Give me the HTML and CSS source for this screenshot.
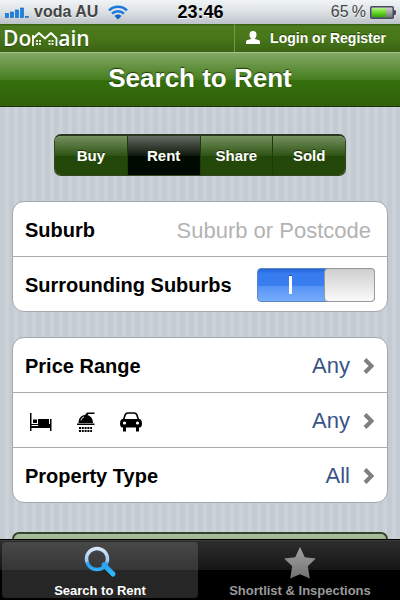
FILE: index.html
```html
<!DOCTYPE html>
<html lang="en">
<head>
    <meta charset="UTF-8">
    <meta name="viewport" content="width=device-width, initial-scale=1.0">
    <title>Search to Rent</title>
    <link rel="stylesheet" href="styles.css">
</head>
<body>

    <div class="status-bar">
        <div class="carrier">
            <svg width="25" height="12" viewBox="0 0 25 12">
                <g fill="#1583ea" stroke="#0b5fc0" stroke-width=".6">
                    <rect x=".5" y="7.5" width="3" height="4"/>
                    <rect x="5.5" y="6" width="3" height="5.5"/>
                    <rect x="10.5" y="4" width="3" height="7.5"/>
                    <rect x="15.5" y="2" width="3" height="9.5"/>
                    <rect x="20.5" y="10.5" width="3" height="1"/>
                </g>
            </svg>
            <span>voda AU</span>
            <svg class="wifi" width="20" height="15" viewBox="0 0 20 15">
                <g fill="none" stroke="#1a78df" stroke-width="2.4">
                    <path d="M1 5.5a12.7 12.7 0 0 1 18 0"/>
                    <path d="M4 8.7a8.5 8.5 0 0 1 12 0"/>
                </g>
                <path d="M10 14.5 6.5 11a5 5 0 0 1 7 0z" fill="#1262c8"/>
            </svg>
        </div>
        <div class="clock">23:46</div>
        <div class="battery">
            <span>65&#8201;%</span>
            <svg width="26" height="13" viewBox="0 0 26 13">
                <defs>
                    <linearGradient id="charge" x2="0" y2="1">
                        <stop offset="0" stop-color="#b5f08a"/>
                        <stop offset=".45" stop-color="#6fdc2c"/>
                        <stop offset="1" stop-color="#2fa508"/>
                    </linearGradient>
                    <linearGradient id="empty" x2="0" y2="1">
                        <stop offset="0" stop-color="#d5d5da"/>
                        <stop offset="1" stop-color="#6d6e74"/>
                    </linearGradient>
                </defs>
                <rect x=".75" y=".75" width="22.5" height="11.5" rx="1" fill="url(#empty)" stroke="#454c5c" stroke-width="1.5"/>
                <rect x="2" y="2" width="14" height="9" fill="url(#charge)"/>
                <path d="M24 4h1l1 1v3l-1 1h-1z" fill="#454c5c"/>
            </svg>
        </div>
    </div>

    <div class="brand-bar">
        <div class="logo">
            <span>Do</span>
            <svg width="27" height="17" viewBox="0 0 27 17">
                <g fill="none" stroke="#fff" stroke-width="1.8" stroke-linejoin="round">
                    <path d="M2 16V5"/>
                    <path d="M2 8.500 8 3l6 5.500L20 3l5.500 5.500V16"/>
                </g>
                <path d="M5 10h2v2H5zM8 10h2v2H8zM5 13h2v2H5zM8 13h2v2H8zM17.500 10h2v2h-2zM20.500 10h2v2h-2zM17.500 13h2v2h-2zM20.500 13h2v2h-2z" fill="#e5eedb"/>
            </svg>
            <span>ain</span>
        </div>
        <a class="login" href="#login">
            <svg width="14" height="14" viewBox="0 0 14 14" fill="#fff">
                <path d="M7 0c2.300 0 3.500 1.600 3.500 3.700 0 1.600-.6 3-1.600 3.800v.5l3.600 1c1 .4 1.500 1.200 1.500 2.200V13H0v-1.800c0-1 .5-1.800 1.500-2.200l3.600-1v-.5c-1-.8-1.600-2.200-1.600-3.800C3.500 1.600 4.700 0 7 0z"/>
            </svg>
            <span>Login or Register</span>
        </a>
    </div>

    <header class="title-bar">
        <h1>Search to Rent</h1>
    </header>

    <main class="content">
        <div class="segments">
            <button type="button">Buy</button>
            <button type="button" class="selected">Rent</button>
            <button type="button">Share</button>
            <button type="button">Sold</button>
        </div>

        <div class="group">
            <div class="row">
                <label for="suburb">Suburb</label>
                <input class="suburb" id="suburb" type="text" placeholder="Suburb or Postcode">
            </div>
            <div class="row">
                <label for="surrounding">Surrounding Suburbs</label>
                <input class="switch" id="surrounding" type="checkbox" checked>
            </div>
        </div>

        <div class="group">
            <button type="button" class="row">
                <span>Price Range</span>
                <span class="value">Any</span>
                <svg class="chevron" width="12" height="16" viewBox="0 0 12 16"><path d="M2 1.500 8.500 8 2 14.500"/></svg>
            </button>
            <button type="button" class="row" aria-label="Bedrooms, bathrooms and parking">
                <span class="features">
                    <svg width="22" height="18" viewBox="0 0 22 18">
                        <path d="M0 0h1.500v11H20V6h1.500v12H20v-3H1.500v3H0zM3 6.500h4V10H3zM8 6h11v8H8z"/>
                        <path d="M1.500 12.500H8" stroke="#fff"/>
                    </svg>
                    <svg width="18" height="20" viewBox="0 0 18 20">
                        <path d="M1.500 11C1.500 6.500 4 3.500 8 3l2-2.500h7.500V2H11.500l-1 1.300c3.500.7 5.500 3.700 5.500 7.700z"/>
                        <path d="M0 11.500h17.500V13H0z"/>
                        <path d="M4 8.500C4.500 6.500 5.500 5.500 7 5" fill="none" stroke="#fff"/>
                        <path d="M2 16h13M2 19h13" stroke="#000" stroke-width="2" stroke-dasharray="2 .8"/>
                    </svg>
                    <svg width="22" height="20" viewBox="0 0 22 20">
                        <path d="M3.500 8 5 3.200C5.500 1.500 6.500 1 8 1h6c1.500 0 2.500.5 3 2.200L18.500 8" fill="none" stroke="#000" stroke-width="1.600"/>
                        <path d="M3 7h16c2 0 3 2 3 4.500 0 2.500-1 4-2.500 4H19V19.500h-3V15.500H6v4H3V15.500h-.5C1 15.500 0 14 0 11.500 0 9 1 7 3 7z"/>
                        <circle cx="4.500" cy="11" r="1.600" fill="#fff"/>
                        <circle cx="17.500" cy="11" r="1.600" fill="#fff"/>
                    </svg>
                </span>
                <span class="value">Any</span>
                <svg class="chevron" width="12" height="16" viewBox="0 0 12 16"><path d="M2 1.500 8.500 8 2 14.500"/></svg>
            </button>
            <button type="button" class="row">
                <span>Property Type</span>
                <span class="value">All</span>
                <svg class="chevron" width="12" height="16" viewBox="0 0 12 16"><path d="M2 1.500 8.500 8 2 14.500"/></svg>
            </button>
        </div>

        <button type="button" class="search" aria-label="Search"></button>
    </main>

    <nav class="tab-bar">
        <a class="tab active" href="#search">
            <svg width="34" height="34" viewBox="0 0 34 34">
                <defs>
                    <linearGradient id="lens" x2="0" y2="32" gradientUnits="userSpaceOnUse">
                        <stop offset="0" stop-color="#e8effb"/>
                        <stop offset=".5" stop-color="#9cc8f5"/>
                        <stop offset=".58" stop-color="#2c9df5"/>
                        <stop offset="1" stop-color="#2fc0fa"/>
                    </linearGradient>
                </defs>
                <g fill="none" stroke="url(#lens)">
                    <path d="m21 20 9 9" stroke-width="5" stroke-linecap="round"/>
                    <circle cx="14" cy="14" r="10.500" stroke-width="3.500"/>
                </g>
            </svg>
            <span>Search to Rent</span>
        </a>
        <a class="tab" href="#shortlist">
            <svg width="34" height="34" viewBox="0 0 34 34">
                <defs>
                    <linearGradient id="star" x2="0" y2="1">
                        <stop offset="0" stop-color="#a4a4a4"/>
                        <stop offset="1" stop-color="#707070"/>
                    </linearGradient>
                </defs>
                <path d="M17 2l4.800 10.200 11 1.300-8 7.700 2 12.300L17 29.200 7.200 33.500l2-12.300-8-7.700 11-1.300z" fill="url(#star)"/>
            </svg>
            <span>Shortlist &amp; Inspections</span>
        </a>
    </nav>

</body>
</html>
```
FILE: styles.css
```css
*,
*::before,
*::after {
    box-sizing: border-box;
}
body {
    display: flex;
    flex-direction: column;
    height: 100vh;
    margin: 0;
    font-family: "Liberation Sans", Arial, sans-serif;
    font-weight: bold;
    background-color: #c5ccd4;
}
a {
    color: inherit;
    text-decoration: none;
}
button,
input {
    margin: 0;
    padding: 0;
    border: 0;
    font: inherit;
    background: none;
}
svg {
    display: block;
    flex: none;
}

/* Status bar */
.status-bar {
    display: grid;
    grid-template-columns: 1fr auto 1fr;
    align-items: center;
    height: 24px;
    padding: 0 4px 0 5px;
    font-size: 16px;
    color: #454545;
    background: linear-gradient(#f0f4f6, #dce1e4 50%, #bcc3c9);
    text-shadow: 0 1px 0 #f4f6f7;
}
.carrier,
.battery {
    display: flex;
    align-items: center;
    gap: 4px;
}
.wifi {
    margin-left: 6px;
}
.clock {
    font-size: 18px;
    color: #000;
}
.battery {
    justify-content: flex-end;
    font-weight: normal;
}

/* Logo and login */
.brand-bar {
    display: flex;
    justify-content: space-between;
    height: 28px;
    color: #fff;
    background: linear-gradient(#36590f, #4b7c1f 8%, #487619 50%, #3b6314);
}
.logo {
    display: flex;
    align-items: center;
    padding-left: 3px;
    font-family: "Open Sans", sans-serif;
    font-size: 21px;
    font-weight: 600;
    line-height: 26px;
    text-shadow: 0 1px 1px #2b4a0c;
}
.login {
    display: flex;
    align-items: center;
    gap: 10px;
    padding: 0 14px 0 11px;
    border-left: 1px solid #6ba032;
    font-size: 14px;
    text-shadow: 0 -1px 0 #2b4a0c;
}

/* Page title */
.title-bar {
    display: flex;
    align-items: center;
    justify-content: center;
    height: 55px;
    padding-bottom: 2px;
    border-top: 1px solid #a5bf90;
    border-bottom: 1px solid #17330a;
    background: linear-gradient(#84a864, #477e20 50%, #35700d 52%, #306009);
}
h1 {
    margin: 0;
    font-size: 26px;
    color: #fff;
    text-shadow: 0 -1px 1px #1c3a06;
}

/* Form */
.content {
    flex: 1;
    min-height: 0;
    padding: 27px 12px 0;
    overflow: hidden;
    background: repeating-linear-gradient(90deg, #c4cbd3 0, #c4cbd3 5px, #cbd3d9 5px, #cbd3d9 9px);
}
.segments {
    display: flex;
    height: 42px;
    margin: 0 42px 25px;
    border: 1px solid #34471f;
    border-top: 2px solid #2b3520;
    border-radius: 7px;
    overflow: hidden;
}
.segments button {
    flex: 1;
    font-size: 15px;
    color: #fff;
    text-shadow: 0 -1px 0 #1c3306;
    background: linear-gradient(#749160, #305415 50%, #24480a 52%, #24480a);
}
.segments button + button {
    border-left: 1px solid #1f3b0b;
}
.segments .selected {
    background: linear-gradient(#636a61, #111a0e 50%, #010a00 52%, #010a00);
}
.group {
    margin-bottom: 25px;
    border: 1px solid #a3a6aa;
    border-radius: 12px;
    background-color: #fff;
    overflow: hidden;
}
.row {
    display: flex;
    align-items: center;
    justify-content: space-between;
    width: 100%;
    height: 54px;
    padding: 2px 12px 0;
    font-size: 20px;
    color: #000;
    text-align: left;
}
.row + .row {
    height: 55px;
    border-top: 1px solid #a9abae;
}
.suburb {
    flex: 1;
    min-width: 0;
    padding: 2px 4px 0 0;
    font-size: 22px;
    font-weight: normal;
    text-align: right;
}
.suburb::placeholder {
    color: #b3b3b3;
}
.switch {
    display: flex;
    align-items: center;
    justify-content: center;
    width: 118px;
    height: 34px;
    padding-right: 52px;
    border: 1px solid #5f86c4;
    border-radius: 4px;
    appearance: none;
    position: relative;
    background: linear-gradient(#2464d8, #367cf0 15%, #3a7ef0 52%, #5693f5 54%, #76adfa);
}
.switch::before {
    content: "";
    width: 3px;
    height: 18px;
    background-color: #fff;
    box-shadow: 0 -1px 0 #1d4fae;
}
.switch::after {
    content: "";
    position: absolute;
    top: -1px;
    right: -1px;
    width: 51px;
    height: 34px;
    border: 1px solid #999;
    border-radius: 4px;
    background: linear-gradient(#cfcfcf, #e4e4e4 50%, #fafafa);
}
.value {
    margin-left: auto;
    font-size: 22px;
    font-weight: normal;
    color: #385487;
}
.chevron {
    margin-left: 13px;
    fill: none;
    stroke: #7f7f7f;
    stroke-width: 4px;
}
.features {
    display: flex;
    align-items: center;
    gap: 25px;
    padding: 2px 0 0 5px;
}
.search {
    display: block;
    width: 100%;
    height: 46px;
    margin-top: 29px;
    border: 2px solid #34442a;
    border-radius: 7px;
    background: linear-gradient(#a9bd9c, #6f9252);
}

/* Tab bar */
.tab-bar {
    display: flex;
    gap: 4px;
    height: 61px;
    padding: 2px;
    border-top: 1px solid #000;
    color: #9a9a9a;
    background: linear-gradient(#4a4a4a 0, #2d2d2d 1px, #161616 30px, #000 30px);
}
.tab {
    display: flex;
    flex: 1;
    flex-direction: column;
    align-items: center;
    gap: 4px;
    padding-top: 3px;
    border-radius: 4px;
    font-size: 13px;
    line-height: 15px;
}
.active {
    color: #fff;
    background: linear-gradient(#484848, #363636 28px, #262626 28px);
}
```
